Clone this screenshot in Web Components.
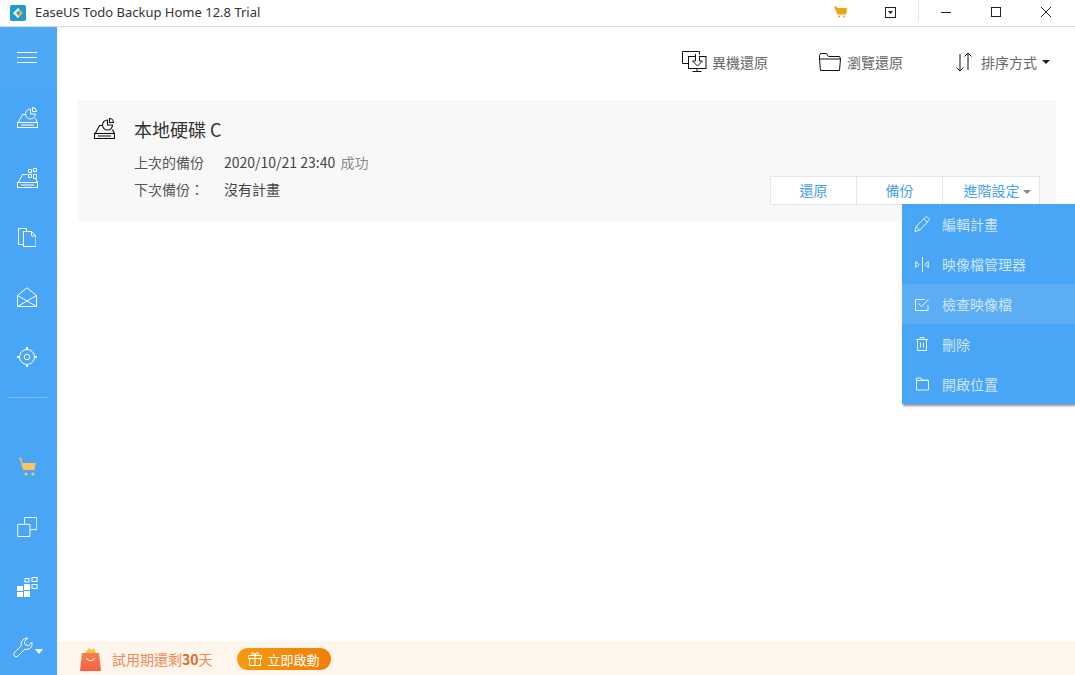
<!DOCTYPE html>
<html lang="zh-Hant">
<head>
<meta charset="utf-8">
<title>EaseUS Todo Backup</title>
<style>
html, body { margin: 0; height: 100%; background: #fff; }
body { font-family: "Noto Sans", "Noto Sans CJK TC", sans-serif; overflow: hidden; }
</style>
</head>
<body>
<app-shell>
  <title-bar slot="title">EaseUS Todo Backup Home 12.8 Trial</title-bar>
  <side-bar slot="side"></side-bar>
  <tool-bar slot="tools"></tool-bar>
  <backup-card slot="main">
    <span slot="name">本地硬碟 C</span>
  </backup-card>
  <trial-bar slot="foot"></trial-bar>
</app-shell>

<script>
const ICONS = {
  menu: '<path d="M0 .5h20M0 5.5h20M0 10.5h20"/>',
  diskPie: '<path d="M1 16l4.5-8.500h3.500M18.500 11.500l2 4.500M4 18h13"/><rect x=".5" y="15.500" width="20" height="5"/><path d="M13.500 2a5 5 0 1 0 5 5h-5z"/><path d="M15.500 .5a4 4 0 0 1 4 4h-4z"/>',
  diskGrid: '<path d="M1 16l4.500-8.500h5M19 12l1.500 4M4 18h13"/><rect x=".5" y="15.500" width="20" height="5"/><path d="M11.500 2.500h3v3h-3zM16.500 1.500h3v3h-3zM11.500 7.500h3v3h-3zM16.500 7.500h3v4h-3z"/>',
  docs: '<path d="M5.500 16.500h-5V.5h8v3"/><path d="M5.500 3.500h8l4.500 4.500v10.500H5.500z"/><path d="M13.500 3.500v4.500H18"/>',
  mail: '<path d="M.5 8.500L10 .8l9.500 7.700v11H.5z"/><path d="M.5 8.500l13 7.500M19.500 8.500l-13 7.500M.5 19.500l6-3.500M19.500 19.500l-6-3.500"/>',
  target: '<circle cx="10" cy="10" r="7.500"/><circle cx="10" cy="10" r="2.800"/><path d="M10 0v2.500M10 17.500V20M0 10h2.500M17.500 10H20" stroke-width="2"/>',
  copy: '<path d="M.5 7.500h12.500v12.500H.5z"/><path d="M7.500 7V.5h12.500v12.500H13.500"/>',
  wrench: '<path d="M13.700 1.500a5.500 5.500 0 0 0-5.400 7.200L1.200 15.800a2.500 2.500 0 0 0 3.500 3.500l7.200-7.100a5.500 5.500 0 0 0 7-6.800l-3.400 3.300-3.300-.9-.9-3.300 3.300-3.200a5.500 5.500 0 0 0-.9-.8z"/>',
  pencil: '<path d="M1 15.500l1.200-5L11.500 1.200a1.500 1.500 0 0 1 2 0l1.300 1.300a1.500 1.500 0 0 1 0 2L5.700 14.200zM2.200 10.500l3.500 3.700M10 3l3.500 3.500"/>',
  mirror: '<path d="M7.500 0v15"/><path d="M.7 4.500l3.500 3-3.500 3zM13.300 4.500l-3.500 3 3.500 3z"/>',
  check: '<path d="M10 2.500H.5v11h12.500V8"/><path d="M3.500 6.500l3 3L13.500 2.500"/>',
  trash: '<path d="M0 2.500h12M4 2.500V.5h4v2M1.500 2.500v11h9v-11M4.500 5.500v5M7.500 5.500v5"/>',
  folder: '<path d="M.5 13V1h4.500l1 2h6.500v10zM.5 3.500h12"/>'
};
const svg = (name, w, h, vb, stroke = '#fff') =>
  `<svg width="${w}" height="${h}" viewBox="0 0 ${vb}" fill="none" stroke="${stroke}" stroke-width="1">${ICONS[name]}</svg>`;

class AppShell extends HTMLElement {
  constructor() {
    super();
    this.attachShadow({ mode: 'open' }).innerHTML = `
    <style>
      :host { display: grid; width: 1075px; height: 675px; grid-template-columns: 57px 1fr; grid-template-rows: 27px 1fr 34px; position: relative; overflow: hidden; }
      .title { grid-column: 1 / 3; }
      .side { grid-row: 2 / 4; min-height: 0; }
      .center { display: flex; flex-direction: column; min-height: 0; }
      .center ::slotted([slot=main]) { margin: 0 19px 0 21px; }
    </style>
    <div class="title"><slot name="title"></slot></div>
    <div class="side"><slot name="side"></slot></div>
    <div class="center"><slot name="tools"></slot><slot name="main"></slot></div>
    <div><slot name="foot"></slot></div>`;
  }
}

class TitleBar extends HTMLElement {
  constructor() {
    super();
    this.attachShadow({ mode: 'open' }).innerHTML = `
    <style>
      :host { display: flex; align-items: center; height: 27px; box-sizing: border-box; border-bottom: 1px solid #dcdcdc; color: #333; }
      .logo { margin: 0 9px 1px 10px; display: block; }
      .name { font: 13px "Noto Sans", sans-serif; flex: 1; margin-bottom: 2px; }
      .ctl { display: flex; align-items: center; height: 26px; padding-right: 4px; }
      .cart { margin: 0 38px 2px 0; display: block; }
      .drop { margin: 0 22px 2px 0; display: block; }
      .sep { width: 1px; height: 21px; background: #e8e8e8; margin: 0 2px 4px 0; }
      .win { width: 50px; display: flex; justify-content: center; margin-bottom: 3px; }
    </style>
    <svg class="logo" width="16" height="16" viewBox="0 0 16 16">
      <rect width="16" height="16" rx="2" fill="#1f9ad6"/>
      <path d="M8 3L3 8l5 5 1.500-1.500L6 8l3.500-3.500z" fill="#fff"/>
      <path d="M9.500 4.500L13 8l-3.500 3.500L8 10l2-2-2-2z" fill="#f2b233"/>
    </svg>
    <span class="name"><slot></slot></span>
    <div class="ctl">
      <svg class="cart" width="13" height="12" viewBox="0 0 13 12"><path d="M0 .5h2.500l1 1.500H13l-.8 6.500H3.500z" fill="#f0a30a"/><circle cx="5" cy="10.500" r="1" fill="#f0a30a"/><circle cx="10" cy="10.500" r="1" fill="#f0a30a"/></svg>
      <svg class="drop" width="11" height="11" viewBox="0 0 11 11"><rect x=".5" y=".5" width="10" height="10" fill="none" stroke="#222"/><path d="M3 4h5L5.500 7z" fill="#222"/></svg>
      <span class="sep"></span>
      <span class="win"><svg width="10" height="10" viewBox="0 0 10 10"><path d="M0 5.500h10" stroke="#222"/></svg></span>
      <span class="win"><svg width="10" height="10" viewBox="0 0 10 10"><rect x=".5" y=".5" width="9" height="9" fill="none" stroke="#222"/></svg></span>
      <span class="win"><svg width="10" height="10" viewBox="0 0 10 10"><path d="M0 0l10 10M10 0L0 10" stroke="#222"/></svg></span>
    </div>`;
  }
}

class SideBar extends HTMLElement {
  constructor() {
    super();
    this.attachShadow({ mode: 'open' }).innerHTML = `
    <style>
      :host { display: flex; flex-direction: column; align-items: stretch; height: 648px; background: #49a5f5; box-sizing: border-box; }
      .it { height: 60px; display: flex; align-items: center; justify-content: center; flex: none; padding-right: 3px; }
      .it svg { display: block; }
      .top { background: #4da8f5; }
      hr { flex: none; border: 0; height: 1px; background: #7cbdf7; margin: 10px 7px 39px; width: 40px; }
      .tool { justify-content: flex-start; padding: 0 0 0 13px; gap: 1px; }
      .tri { width: 0; height: 0; border: 4px solid transparent; border-top: 5px solid #fff; border-bottom: 0; margin-top: 8px; }
    </style>
    <div class="it top">${svg('menu', 20, 11, '20 11')}</div>
    <div class="it">${svg('diskPie', 21, 21, '21 21')}</div>
    <div class="it">${svg('diskGrid', 21, 21, '21 21')}</div>
    <div class="it">${svg('docs', 18, 19, '18 19')}</div>
    <div class="it">${svg('mail', 20, 20, '20 20')}</div>
    <div class="it">${svg('target', 20, 20, '20 20')}</div>
    <hr>
    <div class="it">
      <svg width="17" height="18" viewBox="0 0 17 18"><path d="M0 .7h1.600l3 11" fill="none" stroke="#fcc35f" stroke-width="1.300"/><path d="M3 5h14l-1.800 7H5z" fill="#fcc35f"/><circle cx="7" cy="16" r="1.600" fill="#fcc35f"/><circle cx="14" cy="16" r="1.600" fill="#fcc35f"/></svg>
    </div>
    <div class="it">${svg('copy', 20, 20, '20 20.5')}</div>
    <div class="it">
      <svg width="21" height="20" viewBox="0 0 21 20" fill="#fff"><rect y="9" width="6" height="5"/><rect x="7" y="7" width="6" height="6"/><rect y="15" width="6" height="5"/><rect x="7" y="14" width="6" height="6"/><g fill="none" stroke="#fff"><rect x="8" y="1.500" width="4" height="3.500"/><rect x="15" y=".5" width="5" height="4"/><rect x="15" y="7.500" width="5" height="4"/></g></svg>
    </div>
    <div class="it tool">${svg('wrench', 21, 21, '21 21')}<span class="tri"></span></div>`;
  }
}

class ToolBar extends HTMLElement {
  constructor() {
    super();
    this.attachShadow({ mode: 'open' }).innerHTML = `
    <style>
      :host { display: flex; justify-content: flex-end; align-items: center; height: 73px; box-sizing: border-box; padding: 0 25px 3px 0; flex: none; color: #666; font: 14px "Noto Sans CJK TC", sans-serif; }
      .a { display: flex; align-items: center; }
      svg { display: block; }
      .tri { width: 0; height: 0; border: 4px solid transparent; border-top: 4px solid #222; border-bottom: 0; margin-left: 5px; }
    </style>
    <div class="a" style="margin-right:51px">
      <svg width="25" height="22" viewBox="0 0 25 22" fill="none" stroke="#111" style="margin-right:5px"><path d="M6.500 12.500H.5v-12h17v3"/><rect x="6.500" y="5.500" width="17.500" height="12" fill="#fff"/><path d="M13.500 3v7h-3l5 5 5-5h-3V6" fill="#fff"/><path d="M15 17.500v3M10.500 20.500h9"/></svg>
      <span>異機還原</span>
    </div>
    <div class="a" style="margin-right:53px">
      <svg width="22" height="18" viewBox="0 0 22 18" fill="none" stroke="#111" style="margin-right:6px"><path d="M1.500 17.500L.5 6V2.500l1-2h6l2 3h11l1 2.500-1 11.500z"/><path d="M.5 6h21"/></svg>
      <span>瀏覽還原</span>
    </div>
    <div class="a">
      <svg width="16" height="20" viewBox="0 0 16 20" fill="none" stroke="#111" style="margin-right:9px"><path d="M4 2v17M.5 15.500L4 19l3.500-3.500M12 18V1M8.500 4.500L12 1l3.500 3.500"/></svg>
      <span>排序方式</span><span class="tri"></span>
    </div>`;
  }
}

class BackupCard extends HTMLElement {
  constructor() {
    super();
    this.attachShadow({ mode: 'open' }).innerHTML = `
    <style>
      :host { display: block; position: relative; background: #f8f8f8; height: 121px; box-sizing: border-box; padding: 14px 16px 0 16px; color: #555; font: 14px/27px "Noto Sans CJK TC", sans-serif; }
      .head { display: flex; align-items: center; height: 30px; }
      .head svg { display: block; margin-right: 19px; margin-top: -2px; stroke-width: 1.1; }
      .name { font-size: 18px; color: #333; }
      .row { display: flex; padding-left: 40px; }
      .row b { font-weight: 400; width: 90px; }
      .rows { margin-top: 5px; }
      .ok { color: #888; margin-left: 2px; }
      .val { color: #444; }
      .btns { position: absolute; right: 16px; bottom: 16px; }
    </style>
    <div class="head">
      ${svg('diskPie', 21, 21, '21 21', '#111')}
      <span class="name"><slot name="name"></slot></span>
    </div>
    <div class="rows">
      <div class="row"><b>上次的備份</b><span class="val">2020/10/21 23:40 <span class="ok">成功</span></span></div>
      <div class="row"><b>下次備份：</b><span class="val">沒有計畫</span></div>
    </div>
    <div class="btns"><action-group></action-group></div>`;
  }
}

class ActionGroup extends HTMLElement {
  constructor() {
    super();
    this.attachShadow({ mode: 'open' }).innerHTML = `
    <style>
      :host { display: block; position: relative; }
      .g { display: flex; height: 29px; box-sizing: border-box; border: 1px solid #e3e7ec; background: #fff; color: #4a9fe8; font: 14px/27px "Noto Sans CJK TC", sans-serif; }
      .g span { width: 85px; text-align: center; border-right: 1px solid #e3e7ec; }
      .g span:last-child { width: 84px; padding-left: 12px; border: 0; }
      i { display: inline-block; width: 0; height: 0; border: 4px solid transparent; border-top: 4px solid #888; border-bottom: 0; vertical-align: middle; margin-left: 3px; }
      drop-menu { position: absolute; top: 28px; right: -35px; }
    </style>
    <div class="g"><span>還原</span><span>備份</span><span>進階設定<i></i></span></div>
    <drop-menu></drop-menu>`;
  }
}

class DropMenu extends HTMLElement {
  constructor() {
    super();
    const items = [
      ['pencil', '編輯計畫', 16, 16, '16 16'],
      ['mirror', '映像檔管理器', 15, 15, '15 15'],
      ['check', '檢查映像檔', 14, 14, '14 14'],
      ['trash', '刪除', 12, 14, '12 14'],
      ['folder', '開啟位置', 13, 14, '13 14']
    ];
    this.attachShadow({ mode: 'open' }).innerHTML = `
    <style>
      :host { display: block; width: 173px; background: #49a5f5; box-shadow: 1px 2px 2px rgba(60,60,60,.55); color: #cfe6fc; font: 14px "Noto Sans CJK TC", sans-serif; }
      .m { display: flex; align-items: center; height: 40px; }
      .m.on { background: #5dadf5; }
      .ic { width: 40px; display: flex; justify-content: center; }
      svg { display: block; }
    </style>
    ${items.map((it, i) => `<div class="m${i === 2 ? ' on' : ''}"><span class="ic">${svg(it[0], it[2], it[3], it[4], '#e8f4fe')}</span><span>${it[1]}</span></div>`).join('')}`;
  }
}

class TrialBar extends HTMLElement {
  constructor() {
    super();
    this.attachShadow({ mode: 'open' }).innerHTML = `
    <style>
      :host { display: flex; align-items: center; height: 34px; box-sizing: border-box; padding: 2px 0 0 23px; background: #fef5ec; color: #ee8a5a; font: 14px "Noto Sans CJK TC", sans-serif; }
      .bag { display: block; margin-right: 11px; }
      b { font-weight: 700; color: #e5682a; }
      .go { display: flex; align-items: center; justify-content: center; gap: 6px; width: 94px; height: 22px; margin-left: 24px; border-radius: 11px; background: linear-gradient(90deg, #f59a0f, #f27e08); color: #fff; font-size: 13px; }
      .go svg { display: block; }
    </style>
    <svg class="bag" width="21" height="24" viewBox="0 0 21 24">
      <defs><linearGradient id="b" x1="0" y1="0" x2="0" y2="1"><stop offset="0" stop-color="#f57f4f"/><stop offset="1" stop-color="#f45f45"/></linearGradient></defs>
      <path d="M5 6l4-5 3 2 2-2 2 5z" fill="#f6c33a"/>
      <path d="M2 6h17l2 18H0z" fill="url(#b)"/>
      <path d="M6.500 11c1 3.500 7 3.500 8 0" fill="none" stroke="#fff"/>
    </svg>
    <span>試用期還剩<b>30</b>天</span>
    <div class="go">
      <svg width="14" height="14" viewBox="0 0 14 14" fill="none" stroke="#fff"><path d="M.5 3.500h13v3H.5zM1.500 6.500v7h11v-7M7 3.500v10M7 3.500C3 3.500 2.500 .5 4.500 .5S7 3.500 7 3.500zM7 3.500c4 0 4.500-3 2.500-3S7 3.500 7 3.500z"/></svg>
      <span>立即啟動</span>
    </div>`;
  }
}

customElements.define('app-shell', AppShell);
customElements.define('title-bar', TitleBar);
customElements.define('side-bar', SideBar);
customElements.define('tool-bar', ToolBar);
customElements.define('backup-card', BackupCard);
customElements.define('action-group', ActionGroup);
customElements.define('drop-menu', DropMenu);
customElements.define('trial-bar', TrialBar);
</script>
</body>
</html>
